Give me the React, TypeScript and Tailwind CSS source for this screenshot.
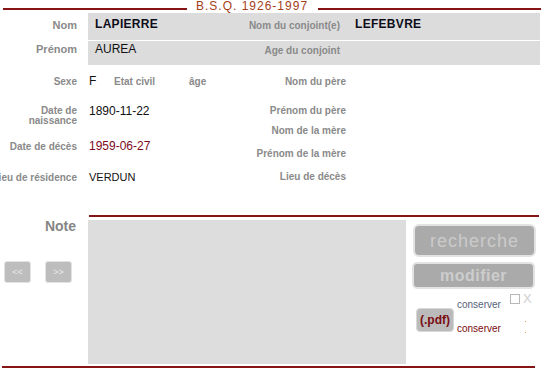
import React from "react";

const lbl = "font-bold text-[#8a8a8a] whitespace-nowrap";

export default function App() {
  return (
    <div className="w-[554px] h-[375px] bg-white overflow-hidden font-['Liberation_Sans',Arial,sans-serif] text-[#111]">
      {/* header */}
      <div className="flex h-[13px]">
        <div className="ml-[3px] mt-[8px] h-[2px] w-[184px] flex-none bg-[#861616]" />
        <div className="ml-[9px] w-[113px] flex-none whitespace-nowrap text-[12px] leading-[12px] tracking-[1px] text-[#a53e18]">
          B.S.Q. 1926-1997
        </div>
        <div className="ml-[9px] mt-[8px] h-[2px] w-[223px] flex-none bg-[#861616]" />
      </div>

      {/* grey block */}
      <div className="flex h-[52px] flex-col">
        <div className="flex h-[27px]">
          <div className={`w-[88px] pr-[11px] pt-[6px] text-right text-[11px] leading-[13px] ${lbl}`}>Nom</div>
          <div className="flex w-[452px] bg-[#dcdcdc]">
            <div className="w-[152px] pl-[7px] pt-[4px] text-[12px] leading-[14px] font-bold tracking-[0.3px] text-[#0d0d1a]">
              LAPIERRE
            </div>
            <div className={`w-[100px] pt-[7px] text-right text-[10px] leading-[12px] ${lbl}`}>Nom du conjoint(e)</div>
            <div className="pl-[15px] pt-[4px] text-[12px] leading-[14px] font-bold tracking-[0.3px] text-[#0d0d1a]">
              LEFEBVRE
            </div>
          </div>
        </div>
        <div className="mt-[1px] flex h-[24px]">
          <div className={`w-[88px] pr-[11px] pt-[2px] text-right text-[11px] leading-[13px] ${lbl}`}>Prénom</div>
          <div className="flex w-[452px] bg-[#dcdcdc]">
            <div className="w-[152px] pl-[7px] pt-[1px] text-[12px] leading-[14px]">AUREA</div>
            <div className={`w-[100px] pt-[4px] text-right text-[10px] leading-[12px] ${lbl}`}>Age du conjoint</div>
          </div>
        </div>
      </div>

      {/* details */}
      <div className="flex h-[150px]">
        <div className="flex w-[245px] flex-none flex-col">
          <div className="mt-[9px] flex h-[14px] items-baseline">
            <div className={`flex w-[77px] justify-end text-[10px] leading-[12px] ${lbl}`}>Sexe</div>
            <div className="ml-[12px] w-[25px] text-[12px] leading-[14px]">F</div>
            <div className={`w-[75px] text-[10px] leading-[12px] ${lbl}`}>Etat civil</div>
            <div className={`text-[10px] leading-[12px] ${lbl}`}>âge</div>
          </div>
          <div className="mt-[16px] flex items-start">
            <div className={`mt-[2px] w-[77px] text-right text-[10px] leading-[10px] ${lbl}`}>
              Date de
              <br />
              naissance
            </div>
            <div className="ml-[12px] text-[12px] leading-[14px]">1890-11-22</div>
          </div>
          <div className="mt-[13px] flex h-[14px] items-baseline">
            <div className={`flex w-[77px] justify-end text-[10px] leading-[12px] ${lbl}`}>Date de décès</div>
            <div className="ml-[12px] text-[12px] leading-[14px] text-[#7d0a22]">1959-06-27</div>
          </div>
          <div className="mt-[18px] flex h-[13px] items-baseline">
            <div className={`flex w-[77px] flex-none justify-end text-[10px] leading-[12px] ${lbl}`}>Lieu de résidence</div>
            <div className="ml-[12px] text-[11px] leading-[13px]">VERDUN</div>
          </div>
        </div>
        <div className={`flex w-[101px] flex-none flex-col items-end text-[10px] leading-[12px] ${lbl}`}>
          <div className="mt-[11px]">Nom du père</div>
          <div className="mt-[17px]">Prénom du père</div>
          <div className="mt-[8px]">Nom de la mère</div>
          <div className="mt-[11px]">Prénom de la mère</div>
          <div className="mt-[11px]">Lieu de décès</div>
        </div>
      </div>

      {/* note section */}
      <div className="flex h-[151px]">
        <div className="flex w-[88px] flex-none flex-col">
          <div className="mt-[3px] pr-[12px] text-right text-[14px] leading-[16px] font-bold text-[#858585]">Note</div>
          <div className="mt-[27px] flex">
            <div className="ml-[4px] flex h-[22px] w-[27px] items-center justify-center rounded-[3px] border border-[#e2e2e2] bg-[#bdbdbd] text-[9px] leading-[9px] text-[#ececec]">
              &lt;&lt;
            </div>
            <div className="ml-[14px] flex h-[22px] w-[27px] items-center justify-center rounded-[3px] border border-[#e2e2e2] bg-[#bdbdbd] text-[9px] leading-[9px] text-[#ececec]">
              &gt;&gt;
            </div>
          </div>
        </div>
        <div className="flex flex-col">
          <div className="ml-[1px] h-[2px] w-[450px] bg-[#861616]" />
          <div className="flex items-start">
            <div className="mt-[3px] h-[144px] w-[318px] flex-none bg-[#dddddd]" />
            <div className="ml-[7px] mt-[7px] flex w-[126px] flex-none flex-col">
              <div className="flex h-[33px] w-[123px] items-center justify-center rounded-[6px] border-2 border-[#e3e3e3] bg-[#aaaaaa] text-[18px] leading-[20px] tracking-[1px] text-[#cacaca]">
                recherche
              </div>
              <div className="-ml-[1px] mt-[5px] flex h-[27px] w-[123px] items-center justify-center rounded-[5px] border-2 border-[#e3e3e3] bg-[#aaaaaa] text-[16px] leading-[18px] font-bold tracking-[0.5px] text-[#cdcdcd]">
                modifier
              </div>
              <div className="flex">
                <div className="ml-[3px] mt-[19px] flex h-[24px] w-[38px] flex-none items-center justify-center rounded-[4px] border border-[#d8d8d8] bg-[#bbbbbb] text-[12px] leading-[14px] font-bold text-[#7a0c12]">
                  (.pdf)
                </div>
                <div className="ml-[3px] flex w-[50px] flex-none flex-col text-[10px] leading-[12px]">
                  <div className="mt-[10px] text-[#56627a]">conserver</div>
                  <div className="mt-[12px] text-[#7a0c12]">conserver</div>
                </div>
                <div className="ml-[3px] flex flex-col">
                  <div className="flex items-start">
                    <div className="mt-[5px] h-[10px] w-[10px] border border-[#b8b8b8] bg-white" />
                    <div className="ml-[3px] mt-[3px] text-[13px] leading-[13px] text-[#cfcfcf]">X</div>
                  </div>
                  <div className="ml-[15px] mt-[16px] h-[1px] w-[1px] bg-[#e0a040]" />
                  <div className="ml-[15px] mt-[10px] h-[1px] w-[1px] bg-[#e0a040]" />
                </div>
              </div>
            </div>
          </div>
        </div>
      </div>
      <div className="ml-[2px] h-[2px] w-[533px] bg-[#861616]" />
    </div>
  );
}
